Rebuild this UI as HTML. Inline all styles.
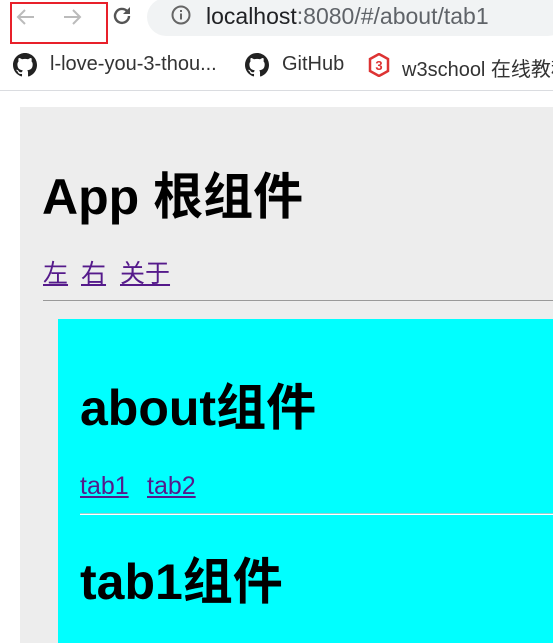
<!DOCTYPE html>
<html style="width:553px;height:643px;overflow:hidden"><head><meta charset="utf-8"><style>
*{margin:0;padding:0;box-sizing:border-box}
body{width:553px;height:643px;overflow:hidden;background:#fff;font-family:"Liberation Sans","Noto Sans CJK SC",sans-serif;position:relative}
.abs{position:absolute}
.gray{left:20px;top:107px;width:533px;height:536px;background:#ededed}
h1{position:absolute;font-weight:bold;font-size:50px;color:#000;white-space:nowrap;line-height:1}
a{color:#551a8b;text-decoration:underline;font-size:25px;position:absolute;white-space:nowrap;line-height:1}
</style></head><body>
<div class="abs" style="left:10px;top:2px;width:98px;height:42px;border:2px solid #e8202a"></div>
<svg class="abs" style="left:14px;top:5px" width="24" height="24" viewBox="0 0 24 24"><path d="M20 12H5M11 5l-7 7 7 7" stroke="#bbb" stroke-width="2" fill="none"/></svg>
<svg class="abs" style="left:60px;top:5px" width="24" height="24" viewBox="0 0 24 24"><path d="M4 12h15M13 5l7 7-7 7" stroke="#bbb" stroke-width="2" fill="none"/></svg>
<svg class="abs" style="left:110px;top:4px" width="24" height="24" viewBox="0 0 24 24"><path d="M19 12a7 7 0 1 1-2-5" stroke="#555" stroke-width="2.4" fill="none"/><path d="M20 3v7h-7z" fill="#555"/></svg>
<div class="abs" style="left:147px;top:-2px;width:420px;height:38px;border-radius:19px;background:#f1f3f4"></div>
<svg class="abs" style="left:170px;top:4px" width="22" height="22" viewBox="0 0 22 22"><circle cx="11" cy="11" r="8.5" stroke="#666" stroke-width="2" fill="none"/><rect x="10" y="9.5" width="2" height="6" fill="#666"/><rect x="10" y="6" width="2" height="2" fill="#666"/></svg>
<div class="abs" style="left:206px;top:3px;font-size:23px;color:#202124;white-space:nowrap">localhost<span style="color:#5f6368">:8080/#/about/tab1</span></div>
<svg class="abs" style="left:13px;top:53px" width="24" height="24" viewBox="0 0 16 16"><path fill="#222" d="M8 0C3.58 0 0 3.58 0 8c0 3.54 2.29 6.53 5.47 7.590.4.07.55-.17.55-.38v-1.33c-2.23.48-2.7-1.08-2.7-1.08-.36-.92-.89-1.17-.89-1.17-.73-.5.06-.49.06-.49.8.06 1.23.83 1.23.83.72 1.23 1.88.87 2.34.67.07-.52.28-.87.51-1.07-1.78-.2-3.64-.89-3.64-3.95 0-.87.31-1.59.82-2.15-.08-.2-.36-1.02.08-2.12 0 0 .67-.21 2.2.82a7.6 7.6 0 0 1 4 0c1.53-1.04 2.2-.82 2.2-.82.44 1.1.16 1.92.08 2.12.51.56.82 1.27.82 2.15 0 3.07-1.87 3.75-3.65 3.95.29.25.54.73.54 1.48v2.2c0 .21.15.46.55.38A8 8 0 0 0 16 8c0-4.42-3.58-8-8-8z"/></svg>
<div class="abs" style="left:50px;top:53px;font-size:20px;color:#333;white-space:nowrap">l-love-you-3-thou...</div>
<svg class="abs" style="left:245px;top:53px" width="24" height="24" viewBox="0 0 16 16"><path fill="#222" d="M8 0C3.58 0 0 3.58 0 8c0 3.54 2.29 6.53 5.47 7.59.4.07.55-.17.55-.38v-1.33c-2.23.48-2.7-1.08-2.7-1.08-.36-.92-.89-1.17-.89-1.17-.73-.5.06-.49.06-.49.8.06 1.23.83 1.23.83.72 1.23 1.88.87 2.34.67.07-.52.28-.87.51-1.07-1.78-.2-3.64-.89-3.64-3.95 0-.87.31-1.59.82-2.15-.08-.2-.36-1.02.08-2.12 0 0 .67-.21 2.2.82a7.6 7.6 0 0 1 4 0c1.53-1.04 2.2-.82 2.2-.82.44 1.1.16 1.92.08 2.12.51.56.82 1.27.82 2.15 0 3.07-1.87 3.75-3.65 3.95.29.25.54.73.54 1.48v2.2c0 .21.15.46.55.38A8 8 0 0 0 16 8c0-4.42-3.58-8-8-8z"/></svg>
<div class="abs" style="left:282px;top:53px;font-size:20px;color:#333">GitHub</div>
<svg class="abs" style="left:368px;top:53px" width="22" height="24" viewBox="0 0 22 24"><path d="M11 1l9 5v12l-9 5-9-5V6z" fill="none" stroke="#d33" stroke-width="2.5"/><text x="11" y="17" font-size="13" font-weight="bold" fill="#d33" text-anchor="middle" font-family="Liberation Sans">3</text></svg>
<div class="abs" style="left:402px;top:53px;font-size:20px;color:#333;white-space:nowrap">w3school 在线教程</div>
<div class="abs" style="left:0;top:90px;width:553px;height:1px;background:#dadce0"></div>
<div class="abs gray"></div>
<h1 style="left:42px;top:172px">App 根组件</h1>
<a style="left:43px;top:262px">左</a><a style="left:81px;top:262px">右</a><a style="left:120px;top:262px">关于</a>
<div class="abs" style="left:43px;top:300px;width:510px;height:2px;border-top:1px solid #999;border-bottom:1px solid #eee"></div>
<div class="abs" style="left:58px;top:319px;width:495px;height:324px;background:#0ff"></div>
<h1 style="left:80px;top:383px">about组件</h1>
<a style="left:80px;top:474px">tab1</a><a style="left:147px;top:474px">tab2</a>
<div class="abs" style="left:80px;top:513px;width:473px;height:2px;border-top:1px solid #9cc;border-bottom:1px solid #fff"></div>
<h1 style="left:80px;top:557px">tab1组件</h1>
</body></html>
